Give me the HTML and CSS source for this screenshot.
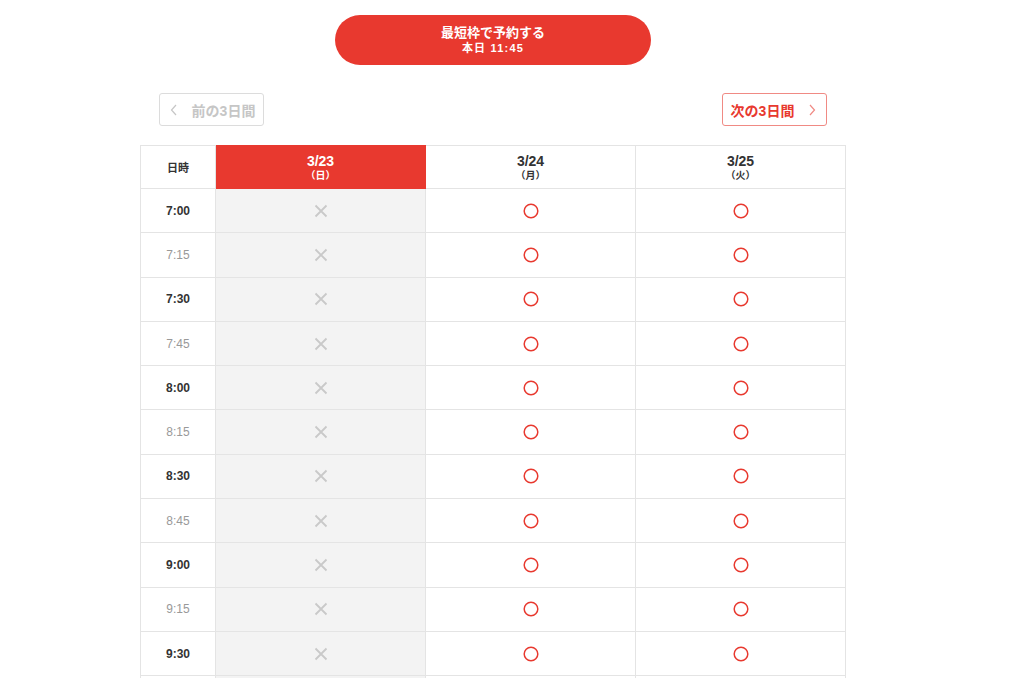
FILE: index.html
```html
<!DOCTYPE html>
<html lang="ja">
<head>
  <meta charset="UTF-8" />
  <meta name="viewport" content="width=device-width, initial-scale=1.0"/>
  <title>予約カレンダー</title>
  <link rel="stylesheet" href="styles.css">
</head>
<body>

  <div class="top">
    <button class="quick-btn">
      <span class="quick-title">最短枠で予約する</span>
      <span class="quick-time">本日 11:45</span>
    </button>
  </div>

  <div class="nav">
    <button class="nav-btn prev" disabled>
      <svg class="chev" width="8" height="12" viewBox="0 0 8 12"><path d="M6 1 L1.5 6 L6 11" fill="none" stroke="currentColor" stroke-width="1.2"/></svg>
      前の3日間
    </button>
    <button class="nav-btn next">
      次の3日間
      <svg class="chev" width="8" height="12" viewBox="0 0 8 12"><path d="M2 1 L6.5 6 L2 11" fill="none" stroke="currentColor" stroke-width="1.2"/></svg>
    </button>
  </div>

  <table class="calendar">
    <thead>
      <tr>
        <th class="time-head">日時</th>
        <th class="day today"><span class="date">3/23</span><span class="dow">（日）</span></th>
        <th class="day"><span class="date">3/24</span><span class="dow">（月）</span></th>
        <th class="day"><span class="date">3/25</span><span class="dow">（火）</span></th>
      </tr>
    </thead>
    <tbody id="slots"></tbody>
  </table>

  <script>
    const times = ['7:00','7:15','7:30','7:45','8:00','8:15','8:30','8:45','9:00','9:15','9:30'];
    const tbody = document.getElementById('slots');

    const cross = '<svg width="14" height="14" viewBox="0 0 14 14"><path d="M1.5 1.5 L12.5 12.5 M12.5 1.5 L1.5 12.5" stroke="#c9c9c9" stroke-width="1.8"/></svg>';
    const circle = '<svg width="16" height="16" viewBox="0 0 16 16"><circle cx="8" cy="8" r="6.8" fill="none" stroke="#e8392f" stroke-width="1.5"/></svg>';

    times.forEach(t => {
      const tr = document.createElement('tr');
      const quarter = t.endsWith(':15') || t.endsWith(':45');
      tr.innerHTML =
        `<td class="time${quarter ? ' minor' : ''}">${t}</td>` +
        `<td class="slot closed">${cross}</td>` +
        `<td class="slot">${circle}</td>` +
        `<td class="slot">${circle}</td>`;
      tbody.appendChild(tr);
    });

    // next row only peeks in at the bottom edge
    const more = document.createElement('tr');
    more.innerHTML = '<td class="time"></td><td class="slot closed"></td><td class="slot"></td><td class="slot"></td>';
    tbody.appendChild(more);
  </script>

</body>
</html>
```

FILE: styles.css
```css
* {
  box-sizing: border-box;
  margin: 0;
  padding: 0;
}

body {
  font-family: "Liberation Sans", "Noto Sans CJK JP", sans-serif;
  background: #fff;
  color: #333;
  padding-top: 15px;
}

.top {
  display: flex;
  padding-left: 335px;
}

.quick-btn {
  width: 316px;
  height: 50px;
  border: none;
  border-radius: 25px;
  background-color: #e8392f;
  color: #fff;
  display: flex;
  flex-direction: column;
  align-items: center;
  justify-content: center;
  font-family: inherit;
  font-weight: bold;
  cursor: pointer;
}

.quick-title {
  font-size: 13px;
  line-height: 16px;
}

.quick-time {
  font-size: 11px;
  line-height: 14px;
  letter-spacing: 1.2px;
}

.nav {
  width: 668px;
  margin: 28px 0 0 159px;
  display: flex;
  justify-content: space-between;
}

.nav-btn {
  height: 33px;
  width: 105px;
  background: #fff;
  border: 1px solid #e8392f;
  border-radius: 3px;
  color: #e8392f;
  font-family: inherit;
  font-size: 14px;
  font-weight: bold;
  display: flex;
  align-items: center;
  justify-content: center;
  gap: 14px;
  cursor: pointer;
}

.nav-btn.next {
  border-color: #f08a84;
  padding-right: 2px;
}

.nav-btn.next .chev {
  color: #f08a84;
}

.nav-btn.prev {
  border-color: #dcdcdc;
  color: #c6c6c6;
  gap: 14px;
  padding-left: 2px;
  cursor: default;
}

.calendar {
  margin: 19px 0 0 140px;
  width: 705px;
  border-collapse: collapse;
  table-layout: fixed;
}

.calendar th,
.calendar td {
  border: 1px solid #e4e4e4;
  text-align: center;
  vertical-align: middle;
}

.time-head {
  width: 75px;
  height: 43px;
  font-size: 11px;
  font-weight: bold;
  color: #333;
}

.day {
  width: 210px;
}

.day .date {
  display: block;
  font-size: 14px;
  font-weight: bold;
  line-height: 16px;
  padding-top: 2px;
}

.day .dow {
  display: block;
  font-size: 10px;
  font-weight: bold;
  line-height: 14px;
}

.day.today {
  background-color: #e8392f;
  border-color: #e8392f;
  color: #fff;
}

.time {
  height: 44.3px;
  font-size: 12px;
  font-weight: bold;
  color: #333;
}

.time.minor {
  font-weight: normal;
  color: #999;
}

.slot svg {
  display: block;
  margin: 0 auto;
}

.slot.closed {
  background-color: #f3f3f3;
}
```
